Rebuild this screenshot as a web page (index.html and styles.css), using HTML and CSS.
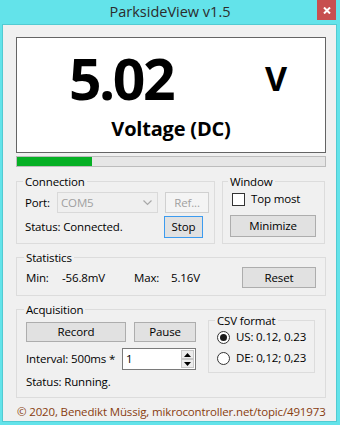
FILE: index.html
```html
<!DOCTYPE html>
<html>
<head>
<meta charset="utf-8">
<link rel="stylesheet" href="styles.css">
</head>
<body>
<div class="window">
  <div class="titlebar">
    <div class="title">ParksideView v1.5</div>
    <div class="close"><svg width="8" height="7" viewBox="0 0 8 7"><path d="M1 0.5 L7 6.5 M7 0.5 L1 6.5" stroke="#fff" stroke-width="2"/></svg></div>
  </div>
  <div class="client">
    <div class="display">
      <div class="reading"><span class="value">5.02</span><span class="unit">V</span></div>
      <div class="mode">Voltage (DC)</div>
    </div>
    <div class="progress"><div class="fill" style="width:75px"></div></div>

    <div class="group-row">
      <div class="group conn">
        <div class="legend">Connection</div>
        <div class="line port-line">
          <span class="port-lbl">Port:</span>
          <div class="combo"><span>COM5</span><svg width="9" height="6" viewBox="0 0 9 6"><path d="M0.5 0.5 L4.5 4.5 L8.5 0.5" fill="none" stroke="#a8a8a8" stroke-width="1.2"/></svg></div>
          <div class="btn disabled ref">Ref...</div>
        </div>
        <div class="line status-line">
          <span class="status-lbl">Status: Connected.</span>
          <div class="btn focused stop">Stop</div>
        </div>
      </div>
      <div class="group win">
        <div class="legend">Window</div>
        <div class="check-line"><span class="checkbox"></span><span>Top most</span></div>
        <div class="btn minimize">Minimize</div>
      </div>
    </div>

    <div class="group stats">
      <div class="legend">Statistics</div>
      <div class="line stats-line">
        <span class="min-lbl">Min:</span>
        <span class="min-val">-56.8mV</span>
        <span class="max-lbl">Max:</span>
        <span class="max-val">5.16V</span>
        <div class="btn reset">Reset</div>
      </div>
    </div>

    <div class="group acq">
      <div class="legend">Acquisition</div>
      <div class="acq-body">
        <div class="acq-left">
          <div class="line btn-line">
            <div class="btn record">Record</div>
            <div class="btn pause">Pause</div>
          </div>
          <div class="line interval-line">
            <span class="interval-lbl">Interval: 500ms *</span>
            <div class="numeric">
              <span class="num-val">1</span>
              <div class="spin">
                <div class="spin-btn"><svg width="7" height="4" viewBox="0 0 7 4"><path d="M0 4 L3.5 0 L7 4 Z" fill="#000"/></svg></div>
                <div class="spin-btn"><svg width="7" height="4" viewBox="0 0 7 4"><path d="M0 0 L3.5 4 L7 0 Z" fill="#000"/></svg></div>
              </div>
            </div>
          </div>
          <div class="run-status">Status: Running.</div>
        </div>
        <div class="group csv">
          <div class="legend">CSV format</div>
          <div class="radio-line"><span class="radio checked"></span><span>US: 0.12, 0.23</span></div>
          <div class="radio-line second"><span class="radio"></span><span>DE: 0,12; 0,23</span></div>
        </div>
      </div>
    </div>

    <div class="footer">© 2020, Benedikt Müssig, mikrocontroller.net/topic/491973</div>
  </div>
</div>
</body>
</html>
```
FILE: styles.css
```css
* { box-sizing: border-box; }
html, body { margin: 0; padding: 0; }
body {
  font-family: "Open Sans", "Noto Sans", sans-serif;
  font-size: 11.5px;
  letter-spacing: -0.15px;
  line-height: 16px;
  color: #000;
}
.window {
  width: 340px;
  height: 425px;
  background: #63e3ea;
  display: flex;
  flex-direction: column;
}
.titlebar {
  height: 24px;
  display: grid;
  grid-template-columns: 1fr auto 1fr;
}
.title {
  grid-column: 2;
  font-size: 14.5px;
  letter-spacing: 0;
  line-height: 22px;
  color: #2c2c2c;
  padding-top: 1px;
  white-space: nowrap;
}
.close {
  grid-column: 3;
  justify-self: end;
  align-self: start;
  width: 19px;
  height: 20px;
  margin-right: 4px;
  background: #c75050;
  display: flex;
  align-items: center;
  justify-content: center;
}
.client {
  flex: 1;
  margin: 0 3px 3px 2px;
  border: 1px solid #52cbd2;
  background: #f0f0f0;
  padding: 12px 10px 0 13px;
}
.display {
  width: 310px;
  height: 116px;
  border: 1px solid #646464;
  background: #fff;
  letter-spacing: 0;
}
.reading {
  display: flex;
  align-items: flex-start;
  margin-top: 8px;
  padding-left: 52px;
  height: 64px;
}
.value {
  width: 196px;
  font-size: 57px;
  line-height: 64px;
  font-weight: 700;
  letter-spacing: -2.5px;
}
.unit {
  font-size: 34px;
  line-height: 40px;
  font-weight: 700;
  margin-top: 12px;
}
.mode {
  margin-top: 7px;
  text-align: center;
  font-size: 20px;
  line-height: 24px;
  font-weight: 700;
  letter-spacing: -0.2px;
}
.progress {
  width: 310px;
  height: 11px;
  margin-top: 3px;
  border: 1px solid #bcbcbc;
  background: #e6e6e6;
}
.fill {
  height: 100%;
  background: #06b025;
}
.group {
  border: 1px solid #dcdcdc;
}
.legend {
  margin-top: -8px;
  margin-left: -2px;
  padding: 0 2px;
  width: fit-content;
  background: #f0f0f0;
  white-space: nowrap;
}
.group-row {
  display: flex;
  margin-top: 14px;
  height: 63px;
}
.conn {
  width: 199px;
  padding: 0 0 0 8px;
}
.win {
  width: 103px;
  margin-left: 7px;
  padding: 0 0 0 7px;
}
.line {
  display: flex;
  align-items: center;
}
.port-line { margin-top: 2px; height: 21px; }
.port-lbl { width: 32px; }
.combo {
  width: 101px;
  height: 21px;
  border: 1px solid #d9d9d9;
  background: #efefef;
  color: #a0a0a0;
  display: flex;
  align-items: center;
  justify-content: space-between;
  padding: 0 5px 0 3px;
}
.btn {
  height: 22px;
  border: 1px solid #adadad;
  background: #e1e1e1;
  display: flex;
  align-items: center;
  justify-content: center;
  white-space: nowrap;
}
.btn.disabled {
  border-color: #d0d0d0;
  background: #f4f4f4;
  color: #a0a0a0;
}
.btn.focused { border-color: #3c9bef; }
.ref { width: 44px; height: 21px; margin-left: 7px; }
.status-line { margin-top: 3px; height: 22px; }
.status-lbl { width: 139px; }
.stop { width: 39px; }
.check-line {
  display: flex;
  align-items: center;
  height: 16px;
  margin-top: 1px;
  padding-left: 2px;
}
.checkbox {
  width: 13px;
  height: 13px;
  border: 1px solid #333;
  background: #fff;
  margin-right: 6px;
}
.minimize { width: 86px; margin-top: 8px; }
.stats {
  width: 310px;
  height: 39px;
  margin-top: 13px;
  padding: 0 9px 0 9px;
}
.stats-line { margin-top: 1px; height: 21px; }
.min-lbl { width: 36px; }
.min-val { width: 72px; }
.max-lbl { width: 37px; }
.max-val { flex: 1; }
.reset { width: 74px; height: 21px; }
.acq {
  width: 310px;
  height: 89px;
  margin-top: 13px;
  padding: 0 0 0 9px;
}
.acq-body { display: flex; }
.acq-left { width: 170px; }
.btn-line { margin-top: 4px; height: 20px; }
.record { width: 100px; height: 20px; }
.pause { width: 62px; height: 20px; margin-left: 8px; }
.interval-line { margin-top: 6px; height: 22px; }
.interval-lbl { width: 96px; }
.numeric {
  width: 74px;
  height: 22px;
  border: 1px solid #7a7a7a;
  background: #fff;
  display: flex;
  justify-content: space-between;
  padding: 1px 1px 1px 3px;
}
.num-val { line-height: 18px; }
.spin {
  width: 13px;
  display: flex;
  flex-direction: column;
}
.spin-btn {
  flex: 1;
  border: 1px solid #c8c8c8;
  background: #ececec;
  display: flex;
  align-items: center;
  justify-content: center;
}
.run-status { margin-top: 4px; }
.csv {
  width: 107px;
  height: 53px;
  margin-top: 2px;
  margin-left: 12px;
  padding: 0 0 0 8px;
}
.radio-line {
  display: flex;
  align-items: center;
  height: 16px;
  white-space: nowrap;
}
.radio-line.second { margin-top: 5px; }
.radio {
  width: 13px;
  height: 13px;
  flex: none;
  border-radius: 50%;
  border: 1px solid #333;
  background: #fff;
  margin-right: 6px;
  display: flex;
  align-items: center;
  justify-content: center;
}
.radio.checked::after {
  content: "";
  width: 7px;
  height: 7px;
  border-radius: 50%;
  background: #1a1a1a;
}
.footer {
  margin-top: 6px;
  padding-left: 1px;
  color: #883c0f;
  white-space: nowrap;
}
```
